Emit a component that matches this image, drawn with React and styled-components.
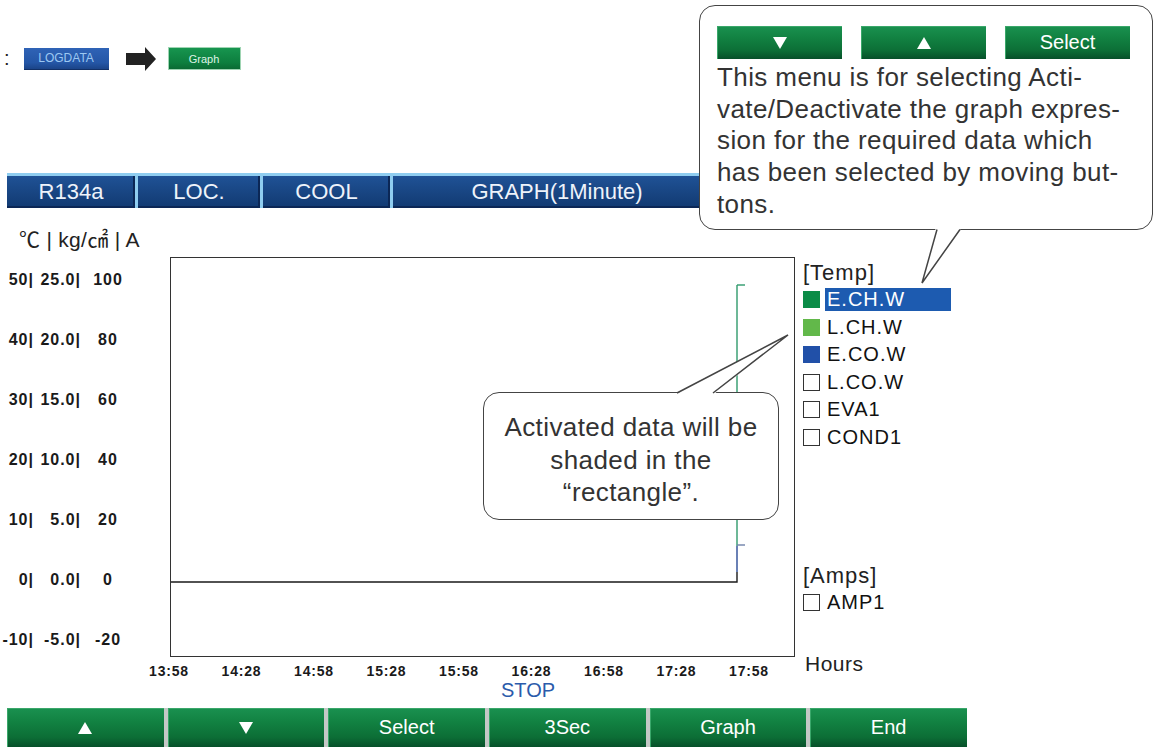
import React from 'react';
import styled, { createGlobalStyle } from 'styled-components';

const Global = createGlobalStyle`
  body {
    margin: 0;
    background: #fff;
    font-family: "Liberation Sans", Arial, sans-serif;
  }
`;

const Page = styled.div`
  position: relative;
  width: 1155px;
  height: 747px;
  overflow: hidden;
  padding-top: 47px;
  box-sizing: border-box;
`;

const Crumbs = styled.div`
  display: flex;
  align-items: center;
  height: 23px;
  padding-left: 4px;
`;

const Colon = styled.span`
  font-size: 20px;
  line-height: 23px;
  color: #222;
  margin-right: 14px;
`;

const LogBtn = styled.div`
  width: 85px;
  height: 22px;
  display: flex;
  align-items: center;
  justify-content: center;
  background: linear-gradient(to bottom, #2f63b6, #2456a6 70%, #1b4488);
  border-bottom: 1px solid #123066;
  box-sizing: border-box;
  color: #9cc8f2;
  font-size: 12px;
`;

const Arrow = styled.svg`
  margin: 0 12px 0 17px;
`;

const SmallGreen = styled.div`
  width: 73px;
  height: 23px;
  display: flex;
  align-items: center;
  justify-content: center;
  background: linear-gradient(to bottom, #17954f, #0d7e3e 70%, #0a6a33);
  border: 1px solid #9ed4b2;
  box-sizing: border-box;
  color: #dff3e6;
  font-size: 11px;
`;

const StatusBar = styled.div`
  display: flex;
  gap: 3px;
  margin: 103px 0 0 7px;
  width: 960px;
  height: 35px;
  padding-top: 3px;
  box-sizing: border-box;
  background: #8fcdf0;
`;

const Seg = styled.div`
  width: ${p => p.$w}px;
  flex: ${p => (p.$w ? 'none' : 1)};
  display: flex;
  align-items: center;
  justify-content: center;
  background: linear-gradient(to bottom, #1f5296, #17437f 60%, #113a72);
  box-shadow: inset -2px -2px 0 #0b2756;
  color: #eef3fa;
  font-size: 22px;
`;

const Units = styled.div`
  margin: 21px 0 0 19px;
  height: 22px;
  line-height: 22px;
  font-size: 21px;
  color: #222;
  font-family: "Liberation Sans", "Noto Sans CJK KR", sans-serif;
  letter-spacing: 0.3px;
`;

const ChartRow = styled.div`
  display: grid;
  grid-template-columns: 170px 625px 1fr;
  height: 396px;
  margin-top: 6px;
`;

const YAxis = styled.div`
  display: flex;
  flex-direction: column;
  gap: 40px;
  padding-top: 13px;
`;

const YLabel = styled.div`
  display: grid;
  grid-template-columns: 34px 47px 54px;
  height: 20px;
  line-height: 20px;
  font-size: 16px;
  letter-spacing: 1px;
  color: #1a1a1a;
  font-weight: bold;
`;

const YCol = styled.span`
  text-align: ${p => p.$align || 'right'};
`;

const Plot = styled.div`
  border: 1px solid #333;
  box-sizing: border-box;
`;

const Legend = styled.div`
  display: flex;
  flex-direction: column;
  padding: 3px 0 0 8px;
`;

const LegendHead = styled.div`
  height: 26px;
  line-height: 26px;
  font-size: 22px;
  color: #222;
  letter-spacing: 1px;
  margin-top: ${p => p.$top || 0}px;
`;

const LegendRow = styled.div`
  display: flex;
  align-items: center;
  height: 27.5px;
  gap: 5px;
`;

const Swatch = styled.span`
  width: 17px;
  height: 17px;
  box-sizing: border-box;
  background: ${p => p.$color || '#fff'};
  border: ${p => (p.$color ? 'none' : '1px solid #333')};
`;

const LegendName = styled.span`
  width: 126px;
  height: 23px;
  line-height: 23px;
  padding-left: 2px;
  box-sizing: border-box;
  font-size: 20px;
  letter-spacing: 1px;
  color: ${p => (p.$on ? '#fff' : '#111')};
  background: ${p => (p.$on ? '#1d5bb0' : 'transparent')};
`;

const XRow = styled.div`
  display: flex;
  align-items: flex-start;
  height: 27px;
  padding-left: 146px;
`;

const Ticks = styled.div`
  display: flex;
  justify-content: space-between;
  width: 626px;
  margin-top: 9px;
`;

const Tick = styled.span`
  width: 46px;
  text-align: center;
  line-height: 18px;
  font-size: 14px;
  letter-spacing: 0.8px;
  color: #1a1a1a;
  font-weight: bold;
`;

const Hours = styled.span`
  margin: 1px 0 0 33px;
  line-height: 20px;
  font-size: 21px;
  letter-spacing: 0.5px;
  color: #222;
`;

const Stop = styled.div`
  width: 1056px;
  text-align: center;
  line-height: 20px;
  font-size: 20px;
  color: #2b5bab;
  font-family: "Liberation Sans Narrow", "Liberation Sans", sans-serif;
`;

const BottomBar = styled.div`
  display: grid;
  grid-template-columns: repeat(6, 1fr);
  gap: 4px;
  width: 960px;
  height: 39px;
  margin: 8px 0 0 7px;
  background: #c4c8c6;
`;

const GreenBtn = styled.div`
  display: flex;
  align-items: center;
  justify-content: center;
  height: ${p => p.$h || 39}px;
  background: linear-gradient(to bottom, #1a9150 0%, #128242 35%, #0c6e36 75%, #07502a 100%);
  box-shadow: inset 1px 1px 0 #3aa76a;
  color: #fff;
  font-size: 20px;
  font-family: "Liberation Sans Narrow", "Liberation Sans", sans-serif;
`;

const Callout = styled.div`
  position: absolute;
  left: ${p => p.$x}px;
  top: ${p => p.$y}px;
  width: ${p => p.$w}px;
  height: ${p => p.$h}px;
  box-sizing: border-box;
  background: #fff;
  border: 1.5px solid #444;
  border-radius: 16px;
  color: #333;
  font-size: 26px;
  letter-spacing: 0.4px;
  line-height: 31.7px;
`;

const MenuCallout = styled(Callout)`
  padding: 20px 0 0 17px;
`;

const MenuButtons = styled.div`
  display: grid;
  grid-template-columns: repeat(3, 125px);
  gap: 19px;
  margin-bottom: 3px;
  letter-spacing: 0;
`;

const NoteCallout = styled(Callout)`
  padding-top: 18px;
  text-align: center;
  line-height: 32.5px;
`;

const Tail = styled.svg`
  position: absolute;
  left: ${p => p.$x}px;
  top: ${p => p.$y}px;
  overflow: visible;
`;

const yRows = [
  ['50|', '25.0|', '100'],
  ['40|', '20.0|', '80'],
  ['30|', '15.0|', '60'],
  ['20|', '10.0|', '40'],
  ['10|', '5.0|', '20'],
  ['0|', '0.0|', '0'],
  ['-10|', '-5.0|', '-20'],
];

const times = ['13:58', '14:28', '14:58', '15:28', '15:58', '16:28', '16:58', '17:28', '17:58'];

const temps = [
  { name: 'E.CH.W', color: '#0b8c47', on: true },
  { name: 'L.CH.W', color: '#62b84a' },
  { name: 'E.CO.W', color: '#2150a8' },
  { name: 'L.CO.W' },
  { name: 'EVA1' },
  { name: 'COND1' },
];

const Tri = ({ up }) => (
  <svg width="14" height="12" viewBox="0 0 14 12">
    <polygon points={up ? '7,0 14,12 0,12' : '0,0 14,0 7,12'} fill="#fff" />
  </svg>
);

export default function App() {
  return (
    <Page>
      <Global />
      <Crumbs>
        <Colon>:</Colon>
        <LogBtn>LOGDATA</LogBtn>
        <Arrow width="30" height="24" viewBox="0 0 30 24">
          <polygon points="0,6 19,6 19,0 30,12 19,24 19,18 0,18" fill="#222" />
        </Arrow>
        <SmallGreen>Graph</SmallGreen>
      </Crumbs>

      <StatusBar>
        <Seg $w={128}>R134a</Seg>
        <Seg $w={122}>LOC.</Seg>
        <Seg $w={127}>COOL</Seg>
        <Seg $w={328}>GRAPH(1Minute)</Seg>
        <Seg />
      </StatusBar>

      <Units>℃ | kg/㎠ | A</Units>

      <ChartRow>
        <YAxis>
          {yRows.map(r => (
            <YLabel key={r[0]}>
              <YCol>{r[0]}</YCol>
              <YCol>{r[1]}</YCol>
              <YCol $align="center">{r[2]}</YCol>
            </YLabel>
          ))}
        </YAxis>

        <Plot>
          <svg width="623" height="394" viewBox="0 0 623 394">
            <g fill="none" strokeWidth="1.4">
              <polyline points="0,324 566,324 566,314" stroke="#1a1a1a" />
              <line x1="566" y1="314" x2="566" y2="288" stroke="#2a4a96" />
              <line x1="566" y1="288" x2="566" y2="27" stroke="#2f9a6c" />
              <line x1="566" y1="27" x2="574" y2="27" stroke="#2f9a6c" />
              <line x1="566" y1="287" x2="574" y2="287" stroke="#6f82aa" />
            </g>
          </svg>
        </Plot>

        <Legend>
          <LegendHead>[Temp]</LegendHead>
          {temps.map(t => (
            <LegendRow key={t.name}>
              <Swatch $color={t.color} />
              <LegendName $on={t.on}>{t.name}</LegendName>
            </LegendRow>
          ))}
          <LegendHead $top={112}>[Amps]</LegendHead>
          <LegendRow>
            <Swatch />
            <LegendName>AMP1</LegendName>
          </LegendRow>
        </Legend>
      </ChartRow>

      <XRow>
        <Ticks>
          {times.map(t => (
            <Tick key={t}>{t}</Tick>
          ))}
        </Ticks>
        <Hours>Hours</Hours>
      </XRow>

      <Stop>STOP</Stop>

      <BottomBar>
        <GreenBtn><Tri up /></GreenBtn>
        <GreenBtn><Tri /></GreenBtn>
        <GreenBtn>Select</GreenBtn>
        <GreenBtn>3Sec</GreenBtn>
        <GreenBtn>Graph</GreenBtn>
        <GreenBtn>End</GreenBtn>
      </BottomBar>

      <MenuCallout $x={699} $y={5} $w={454} $h={225}>
        <MenuButtons>
          <GreenBtn $h={33}><Tri /></GreenBtn>
          <GreenBtn $h={33}><Tri up /></GreenBtn>
          <GreenBtn $h={33}>Select</GreenBtn>
        </MenuButtons>
        This menu is for selecting Acti-<br />
        vate/Deactivate the graph expres-<br />
        sion for the required data which<br />
        has been selected by moving but-<br />
        tons.
      </MenuCallout>
      <Tail $x={915} $y={227} width="50" height="60">
        <polygon points="21,0 47,0 7,56" fill="#fff" />
        <polyline points="22,2.5 7,56 45,2.5" fill="none" stroke="#444" strokeWidth="1.5" />
      </Tail>

      <NoteCallout $x={483} $y={392} $w={296} $h={128}>
        Activated data will be<br />
        shaded in the<br />
        “rectangle”.
      </NoteCallout>
      <Tail $x={670} $y={330} width="125" height="65">
        <polygon points="6,64 44,64 118,5" fill="#fff" />
        <polyline points="7,63 118,5 43,63" fill="none" stroke="#444" strokeWidth="1.5" />
      </Tail>
    </Page>
  );
}
